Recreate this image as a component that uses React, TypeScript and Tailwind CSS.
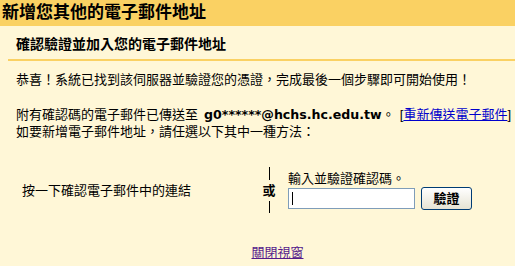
export default function App() {
  return (
    <div className="w-[515px] h-[266px] overflow-hidden bg-[#fff7d7] text-black font-['Liberation_Sans','Noto_Sans_CJK_TC',sans-serif]">
      <div className="h-[26px] bg-[#fad163] pl-[2px] flex items-center text-[17px] font-bold leading-[26px]">
        新增您其他的電子郵件地址
      </div>
      <div className="ml-[8px] h-[35px] border-b-2 border-[#fad163] pl-[8px] pt-[10px] text-[14px] font-bold leading-[17px]">
        確認驗證並加入您的電子郵件地址
      </div>
      <div className="pl-[16px] text-[13px] leading-[17px]">
        <div className="mt-[10px] whitespace-nowrap">恭喜！系統已找到該伺服器並驗證您的憑證，完成最後一個步驟即可開始使用！</div>
        <div className="mt-[18px] whitespace-nowrap flex items-baseline">
          <span>附有確認碼的電子郵件已傳送至</span>
          <span className="ml-[6px] font-['DejaVu_Sans'] font-bold text-[12.6px]">g0******@hchs.hc.edu.tw</span>
          <span>。</span>
          <span className="ml-[5px]">[</span>
          <span className="text-[#0000cc] underline">重新傳送電子郵件</span>
          <span>]</span>
        </div>
        <div className="whitespace-nowrap">如要新增電子郵件地址，請任選以下其中一種方法：</div>
      </div>
      <div className="mt-[27px] flex items-center text-[13px]">
        <div className="w-[262px] pl-[22px] leading-[17px]">按一下確認電子郵件中的連結</div>
        <div className="w-[14px] flex flex-col items-center">
          <div className="w-px h-[13px] bg-black" />
          <div className="mt-[2px] leading-[18px] font-bold">或</div>
          <div className="mt-[1px] w-px h-[12px] bg-black" />
        </div>
        <div className="pl-[12px] flex flex-col">
          <div className="leading-[16px]">輸入並驗證確認碼。</div>
          <div className="flex items-center">
            <div className="w-[127px] h-[21px] border border-[#7f9db9] bg-white flex items-center pl-[3px]">
              <span className="w-px h-[13px] bg-black" />
            </div>
            <button className="ml-[6px] w-[51px] h-[23px] rounded-[3px] border border-[#003c74] bg-gradient-to-b from-white to-[#e6e3d3] text-[13px] font-bold leading-[21px] text-black">
              驗證
            </button>
          </div>
        </div>
      </div>
      <div className="mt-[31px] pl-[40px] flex justify-center text-[13px] leading-[17px]">
        <span className="text-[#551a8b] underline">關閉視窗</span>
      </div>
    </div>
  );
}
